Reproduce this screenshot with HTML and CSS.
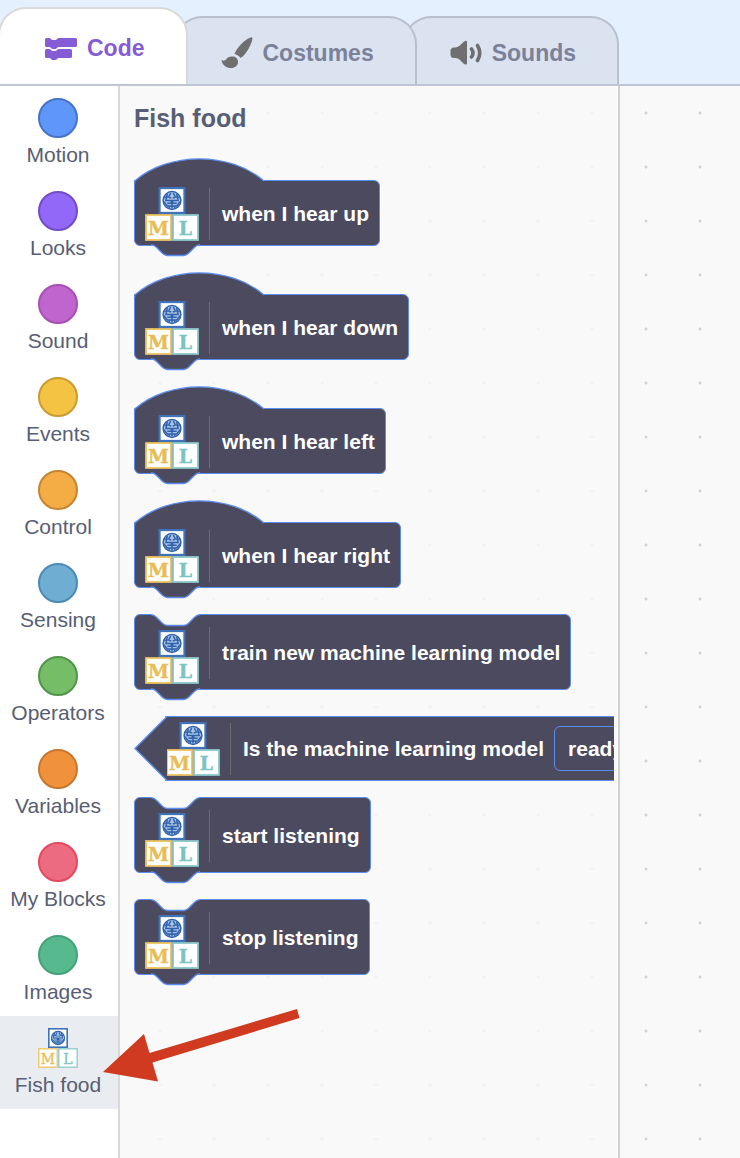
FILE: index.html
```html
<!DOCTYPE html>
<html lang="en">
<head>
<meta charset="utf-8">
<title>Code editor</title>
<link rel="stylesheet" href="styles.css">
</head>
<body>
<svg class="defs" aria-hidden="true">
  <symbol id="ml" viewBox="0 0 40 40">
    <rect x="10.8" y=".8" width="18.4" height="18.4" fill="#fff" stroke="#3f72b8" stroke-width="1.6"/>
    <g fill="none" stroke="#2f62ab" stroke-width="1.1">
      <circle cx="20" cy="10" r="6.6" fill="#a9c3e6"/>
      <path d="M14 7.500h3.500l1.500 -3M26 7.500h-3.500l-1.500 -3M16.500 5l-1 5h4v2h-3M23.500 5l1 5h-4v2h3M14 11l2.500 3h7l2.500 -3M18 8h1.500M20.500 8h1.500M18 14v2M22 14v2M20 12v4"/>
    </g>
    <rect x=".8" y="20.800" width="18.400" height="18.400" fill="#fff" stroke="#efc769" stroke-width="1.400"/>
    <rect x="20.800" y="20.800" width="18.400" height="18.400" fill="#fff" stroke="#92cdd0" stroke-width="1.400"/>
    <text x="10" y="35.500" class="glyph glyph-m">M</text>
    <text x="30" y="35.500" class="glyph glyph-l">L</text>
  </symbol>
  <symbol id="hat" viewBox="0 0 98 19">
    <path d="M.5 19V17C25.500 -5 71.500 -5 96.500 17L98 18V19Z" fill="#4c4a5f"/>
    <path d="M.5 19V17C25.500 -5 71.500 -5 96.500 17" fill="none" stroke="#5a8df0"/>
  </symbol>
  <symbol id="notch" viewBox="0 0 36 10">
    <path d="M0 0V1C2 1 3 2 4 3L8 7C9 8 10 9 12 9H24C26 9 27 8 28 7L32 3C33 2 34 1 36 1V0Z"/>
    <path d="M0 1C2 1 3 2 4 3L8 7C9 8 10 9 12 9H24C26 9 27 8 28 7L32 3C33 2 34 1 36 1" fill="none" stroke="#5a8df0"/>
  </symbol>
</svg>

<nav class="tabs">
  <button class="tab tab-active">
    <svg width="32" height="22" viewBox="0 0 32 22" fill="#855cd6"><path d="M1.500 0H4C6 0 6 2 8 2H10C12 2 12 0 14 0H30.500Q32 0 32 1.500V7.500Q32 9 30.500 9H14C12 9 12 11 10 11H8C6 11 6 9 4 9H1.500Q0 9 0 7.500V1.500Q0 0 1.500 0Z"/><path d="M1.500 11H4C6 11 6 13 8 13H10C12 13 12 11 14 11H25.500Q27 11 27 12.500V18.500Q27 20 25.500 20H14C12 20 12 22 10 22H8C6 22 6 20 4 20H1.500Q0 20 0 18.500V12.500Q0 11 1.500 11Z"/></svg>
    Code
  </button>
  <button class="tab">
    <svg width="32" height="32" viewBox="0 0 32 32" fill="#6f6f6f"><path d="M31 .5C32 1 31 5 29 9C26 15 23 19 19.500 21C18 19 16 17.500 13.500 17C15 13 20 6 25 3C28 1 30.500 0 31 .5Z"/><path d="M10 19.500C14 19 17 21 17 25C17 29 13 31.500 9 31C4 30.500 1 27 .5 23C2 24 4 24 5 22.500C6 21 7.500 19.800 10 19.500Z"/></svg>
    Costumes
  </button>
  <button class="tab">
    <svg width="32" height="26" viewBox="0 0 32 26"><path d="M4 7.500C9 7.500 10 5 13 2.500C15 .5 17 0 17 2V23C17 25 15 25 13 23C10 20 9 18 4 18Q.5 18 .5 14.500V11Q.5 7.500 4 7.500Z" fill="#6f6f6f"/><path d="M21.500 9Q24.500 13 21.500 17M27.500 5.500Q32 13 27.500 20.500" fill="none" stroke="#6f6f6f" stroke-width="3.600" stroke-linecap="round"/></svg>
    Sounds
  </button>
</nav>

<main class="editor">
  <nav class="categories">
    <button class="category"><span class="dot motion"></span>Motion</button>
    <button class="category"><span class="dot looks"></span>Looks</button>
    <button class="category"><span class="dot sound"></span>Sound</button>
    <button class="category"><span class="dot events"></span>Events</button>
    <button class="category"><span class="dot control"></span>Control</button>
    <button class="category"><span class="dot sensing"></span>Sensing</button>
    <button class="category"><span class="dot operators"></span>Operators</button>
    <button class="category"><span class="dot variables"></span>Variables</button>
    <button class="category"><span class="dot my-blocks"></span>My Blocks</button>
    <button class="category"><span class="dot images"></span>Images</button>
    <button class="category selected"><svg width="40" height="40"><use href="#ml"/></svg>Fish food</button>
  </nav>

  <section class="palette">
    <h1 class="heading">Fish food</h1>
    <div class="blocks">
      <div class="block hat"><svg class="hat-top"><use href="#hat"/></svg><svg class="notch"><use href="#notch"/></svg><svg class="logo"><use href="#ml"/></svg><span class="label">when I hear up</span></div>
      <div class="block hat"><svg class="hat-top"><use href="#hat"/></svg><svg class="notch"><use href="#notch"/></svg><svg class="logo"><use href="#ml"/></svg><span class="label">when I hear down</span></div>
      <div class="block hat"><svg class="hat-top"><use href="#hat"/></svg><svg class="notch"><use href="#notch"/></svg><svg class="logo"><use href="#ml"/></svg><span class="label">when I hear left</span></div>
      <div class="block hat"><svg class="hat-top"><use href="#hat"/></svg><svg class="notch"><use href="#notch"/></svg><svg class="logo"><use href="#ml"/></svg><span class="label">when I hear right</span></div>
      <div class="block stack"><svg class="notch notch-in"><use href="#notch"/></svg><svg class="notch"><use href="#notch"/></svg><svg class="logo"><use href="#ml"/></svg><span class="label">train new machine learning model</span></div>
      <div class="block boolean">
        <svg class="point" viewBox="0 0 33 65"><path d="M33 .5L1 32.500L33 64.500" fill="#4c4a5f" stroke="#5a8df0" stroke-width="1.400"/></svg>
        <svg class="logo"><use href="#ml"/></svg>
        <label class="label" for="state">Is the machine learning model</label>
        <select class="field" id="state"><option>ready</option></select>
      </div>
      <div class="block stack"><svg class="notch notch-in"><use href="#notch"/></svg><svg class="notch"><use href="#notch"/></svg><svg class="logo"><use href="#ml"/></svg><span class="label">start listening</span></div>
      <div class="block stack"><svg class="notch notch-in"><use href="#notch"/></svg><svg class="notch"><use href="#notch"/></svg><svg class="logo"><use href="#ml"/></svg><span class="label">stop listening</span></div>
    </div>
  </section>
  <section class="workspace"></section>
  <svg class="arrow" width="200" height="76" viewBox="0 0 200 76"><path d="M3 40L44 2L49.500 21L197 -23L199.500 -14L52.500 30.500L58 49.500Z" fill="#d03a20"/></svg>
</main>
</body>
</html>
```
FILE: styles.css
```css
* {
  box-sizing: border-box;
}

body {
  margin: 0;
  min-height: 100vh;
  display: flex;
  flex-direction: column;
  background: #e5f0ff;
  color: #575e75;
  font-family: "Liberation Sans", Arial, sans-serif;
}

button {
  margin: 0;
  font: inherit;
  color: inherit;
  cursor: pointer;
}

.defs {
  display: none;
}

.glyph {
  font-family: "DejaVu Serif", serif;
  font-size: 14px;
  text-anchor: middle;
  stroke-width: 0.3px;
}

.glyph-m {
  fill: #e8bd55;
  stroke: #e8bd55;
}

.glyph-l {
  fill: #7cc3c6;
  stroke: #7cc3c6;
}

/* Tabs */

.tabs {
  display: flex;
  align-items: flex-end;
  height: 86px;
  padding-right: 16px;
  border-bottom: 2px solid #bfc5d5;
}

.tab {
  display: flex;
  align-items: center;
  gap: 10px;
  height: 68px;
  margin-left: -14px;
  padding: 4px 41px 0 45px;
  border: 2px solid #b8bfcf;
  border-bottom: 0;
  border-radius: 28px 28px 0 0;
  background: #dbe2f0;
  color: #7a8199;
  font-size: 23px;
  font-weight: bold;
}

.tab:nth-child(2) {
  z-index: 1;
}

.tab-active {
  z-index: 2;
  height: 77px;
  margin-left: -2px;
  padding-top: 4px;
  background: #fff;
  border-color: #d9d9d9;
  color: #855cd6;
}

/* Editor */

.editor {
  position: relative;
  flex: 1;
  display: flex;
  background: #f9f9f9 radial-gradient(circle at 26px 27px, #d4d4d4 1px, transparent 2px) 26px 0 / 54px 54px;
}

.categories {
  flex: none;
  width: 120px;
  border-right: 2px solid #d9d9d9;
  background: #fff;
}

.category {
  display: flex;
  flex-direction: column;
  align-items: center;
  gap: 5px;
  width: 100%;
  height: 93px;
  padding: 12px 2px 0 0;
  border: 0;
  background: transparent;
  font-size: 21px;
  line-height: 24px;
  white-space: nowrap;
}

.category svg,
.tab svg {
  flex: none;
}

.selected {
  background: #e9edf2;
}

.dot {
  flex: none;
  width: 40px;
  height: 40px;
  border: 2px solid;
  border-radius: 50%;
}

.motion { background: #5f96f9; border-color: #4573c6; }
.looks { background: #9168f8; border-color: #724cc4; }
.sound { background: #c065cd; border-color: #a74fb4; }
.events { background: #f5c344; border-color: #c99b30; }
.control { background: #f3ad44; border-color: #c38532; }
.sensing { background: #6fadd3; border-color: #4a8ab5; }
.operators { background: #75bd66; border-color: #4f964b; }
.variables { background: #f0923c; border-color: #c87730; }
.my-blocks { background: #ed6b80; border-color: #e6485e; }
.images { background: #57ba8f; border-color: #46a07a; }

/* Palette */

.palette {
  flex: none;
  width: 500px;
  padding: 16px 4px 0 14px;
  border-right: 2px solid #d2d2d2;
  background: rgb(249 249 249 / 80%);
}

.heading {
  margin: 0;
  font-size: 25px;
  line-height: 32px;
}

.blocks {
  display: flex;
  flex-direction: column;
  align-items: flex-start;
  gap: 16px;
  padding: 24px 0 16px;
  overflow: hidden;
}

.block {
  position: relative;
  flex: none;
  display: flex;
  align-items: center;
  border: 1px solid #5a8df0;
  border-radius: 6px;
  background: #4c4a5f;
  color: #fff;
  font-size: 21px;
  font-weight: bold;
  white-space: nowrap;
}

.hat {
  height: 66px;
  margin-top: 22px;
  margin-bottom: 10px;
  padding: 2px 10px 0;
  border-top-left-radius: 0;
}

.stack {
  height: 76px;
  margin-bottom: 10px;
  padding: 2px 10px 0;
}

.logo {
  flex: none;
  width: 54px;
  height: 54px;
}

.stack .logo {
  margin-top: 8px;
}

.label {
  margin-left: 10px;
  padding-left: 12px;
  border-left: 1px solid #6d6b72;
  line-height: 52px;
}

.hat-top {
  position: absolute;
  left: -1px;
  top: -23px;
  width: 132px;
  height: 26px;
}

.notch {
  position: absolute;
  left: 16px;
  bottom: -12px;
  width: 49px;
  height: 14px;
  fill: #4c4a5f;
}

.notch-in {
  top: -2px;
  bottom: auto;
  fill: #f9f9f9;
}

.boolean {
  height: 65px;
  padding-left: 32px;
  border-left: 0;
  border-radius: 0;
  background: linear-gradient(#4c4a5f, #4c4a5f) 32px 0 no-repeat;
  border-image: linear-gradient(to right, transparent 32px, #5a8df0 32px) 1;
}

.point {
  position: absolute;
  left: 0;
  top: -1px;
  width: 33px;
  height: 65px;
}

.field {
  appearance: none;
  height: 45px;
  margin-left: 10px;
  padding: 0 60px 0 13px;
  border: 1px solid #5a8df0;
  border-radius: 6px;
  background: #4c4a5f;
  color: #fff;
  font: inherit;
}

.workspace {
  flex: 1;
}

/* Annotation */

.arrow {
  position: absolute;
  left: 100px;
  top: 946px;
  overflow: visible;
}
```
